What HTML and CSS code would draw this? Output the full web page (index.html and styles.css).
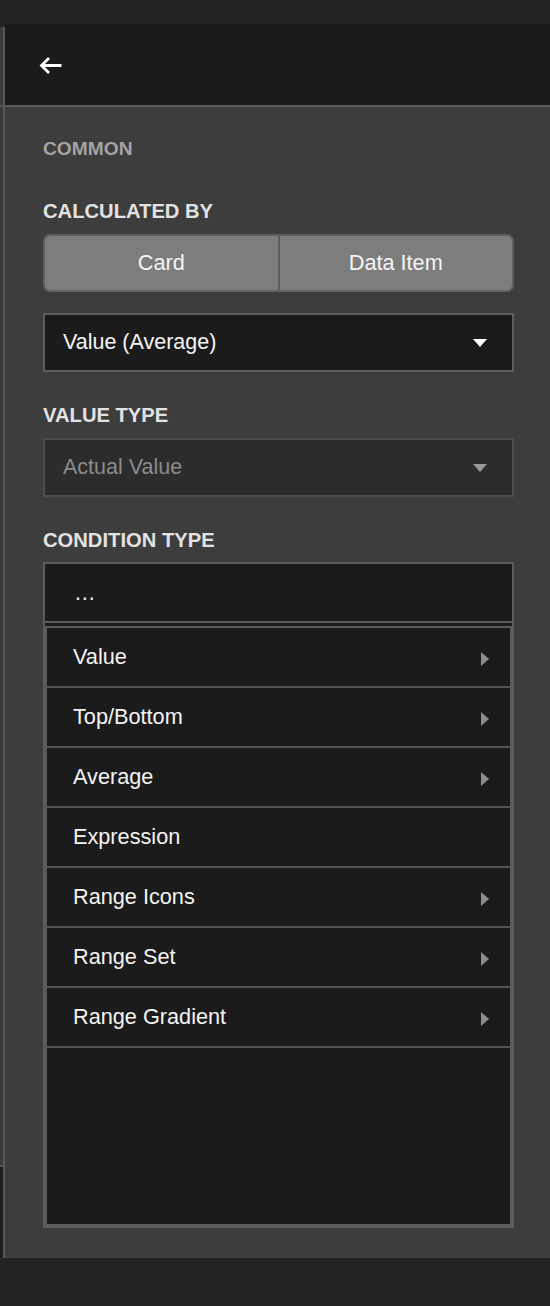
FILE: index.html
```html
<!DOCTYPE html>
<html lang="en">
<head>
<meta charset="utf-8">
<title>Condition settings</title>
<link rel="stylesheet" href="styles.css">
</head>
<body>
<div class="frame">
  <div class="rail"></div>
  <div class="panel">
    <div class="header">
      <button class="back" aria-label="Back">
        <svg width="24" height="20" viewBox="0 0 24 20" aria-hidden="true">
          <path d="M22.5 10.5 H3 M10 3 L2.5 10.5 L10 18" fill="none" stroke="#ffffff" stroke-width="2.8" stroke-linejoin="miter"/>
        </svg>
      </button>
    </div>
    <div class="body">
      <div class="section-title">COMMON</div>

      <div class="label">CALCULATED BY</div>
      <div class="segmented">
        <div class="seg">Card</div>
        <div class="seg">Data Item</div>
      </div>
      <div class="select select-active">
        <span class="select-text">Value (Average)</span>
        <span class="caret"></span>
      </div>

      <div class="label">VALUE TYPE</div>
      <div class="select select-disabled">
        <span class="select-text">Actual Value</span>
        <span class="caret"></span>
      </div>

      <div class="label">CONDITION TYPE</div>
      <div class="combo">
        <div class="combo-head">…</div>
        <div class="menu">
          <div class="item"><span>Value</span><span class="arrow"></span></div>
          <div class="item"><span>Top/Bottom</span><span class="arrow"></span></div>
          <div class="item"><span>Average</span><span class="arrow"></span></div>
          <div class="item"><span>Expression</span></div>
          <div class="item"><span>Range Icons</span><span class="arrow"></span></div>
          <div class="item"><span>Range Set</span><span class="arrow"></span></div>
          <div class="item"><span>Range Gradient</span><span class="arrow"></span></div>
        </div>
      </div>
    </div>
  </div>
</div>
</body>
</html>
```

FILE: styles.css
```css
* { box-sizing: border-box; }

html, body {
  margin: 0;
  padding: 0;
  background: #232323;
  font-family: "Liberation Sans", Arial, Helvetica, sans-serif;
  color: #f2f2f2;
}

.frame {
  display: flex;
  margin-top: 24px;
  height: 1234px;
}

.rail {
  width: 5px;
  flex: none;
  background:
    linear-gradient(#5a5a5a, #5a5a5a) 0 81px / 3px 2px no-repeat,
    linear-gradient(#555555, #555555) 0 1141px / 3px 2px no-repeat,
    linear-gradient(#585858, #585858) 3px 3px / 2px 100% no-repeat,
    linear-gradient(to bottom, #232323 3px, #3b3b3b 3px, #3b3b3b 1141px, #1e1e1e 1141px) 0 0 / 3px 100% no-repeat;
}

.panel {
  flex: 1;
  display: flex;
  flex-direction: column;
  background: #3d3d3d;
}

.header {
  height: 83px;
  flex: none;
  background: #1b1b1b;
  border-bottom: 2px solid #5a5a5a;
  display: flex;
  align-items: center;
  padding-left: 34px;
}

.back {
  background: none;
  border: 0;
  padding: 0;
  width: 24px;
  height: 20px;
  display: block;
}
.back svg { display: block; }

.body {
  flex: 1;
  display: flex;
  flex-direction: column;
  padding: 30px 36px 30px 38px;
}

.section-title {
  font-size: 19.2px;
  font-weight: bold;
  line-height: 24px;
  color: #a4a4a4;
  margin-bottom: 38px;
}

.label {
  font-size: 20.2px;
  font-weight: bold;
  line-height: 24px;
  color: #e2e2e2;
  margin-bottom: 11px;
}

.segmented {
  display: flex;
  height: 58px;
  background: #7d7d7d;
  border: 2px solid #5e5e5e;
  border-bottom-color: #626262;
  border-radius: 7px;
  margin-bottom: 21px;
  overflow: hidden;
}

.seg {
  flex: 1;
  display: flex;
  align-items: center;
  justify-content: center;
  font-size: 21.7px;
  color: #f4f4f4;
}
.seg + .seg { border-left: 2px solid #5f5f5f; }

.select {
  height: 59px;
  display: flex;
  align-items: center;
  justify-content: space-between;
  padding: 0 25px 0 18px;
  border: 2px solid #5d5d5d;
  font-size: 21.5px;
  margin-bottom: 31px;
}

.select-active {
  background: #1b1b1b;
  color: #f5f5f5;
}
.select-active .caret { border-top-color: #ffffff; }

.select-disabled {
  background: #2c2c2c;
  border-color: #4c4c4c;
  color: #8b8b8b;
}
.select-disabled .caret { border-top-color: #9a9a9a; }

.caret {
  width: 0;
  height: 0;
  border-left: 7.5px solid transparent;
  border-right: 7.5px solid transparent;
  border-top: 8px solid #ffffff;
}

.combo {
  height: 666px;
  flex: none;
  display: flex;
  flex-direction: column;
  background: #1b1b1b;
  border: 2px solid #5c5c5c;
  margin-top: -1px;
}

.combo-head {
  height: 59px;
  flex: none;
  display: flex;
  align-items: center;
  padding: 0 0 0 29px;
  font-size: 21.7px;
  color: #f5f5f5;
  border-bottom: 2px solid #5c5c5c;
}

.menu {
  flex: 1;
  margin-top: 3px;
  border: 2px solid #5a5a5a;
  background: #1b1b1b;
}

.item {
  height: 60px;
  display: flex;
  align-items: center;
  justify-content: space-between;
  padding: 0 21px 0 26px;
  border-bottom: 2px solid #525252;
  font-size: 21.7px;
  color: #f3f3f3;
}

.arrow {
  width: 0;
  height: 0;
  border-top: 7px solid transparent;
  border-bottom: 7px solid transparent;
  border-left: 8px solid #8c8c8c;
  margin-top: 3px;
}
```
